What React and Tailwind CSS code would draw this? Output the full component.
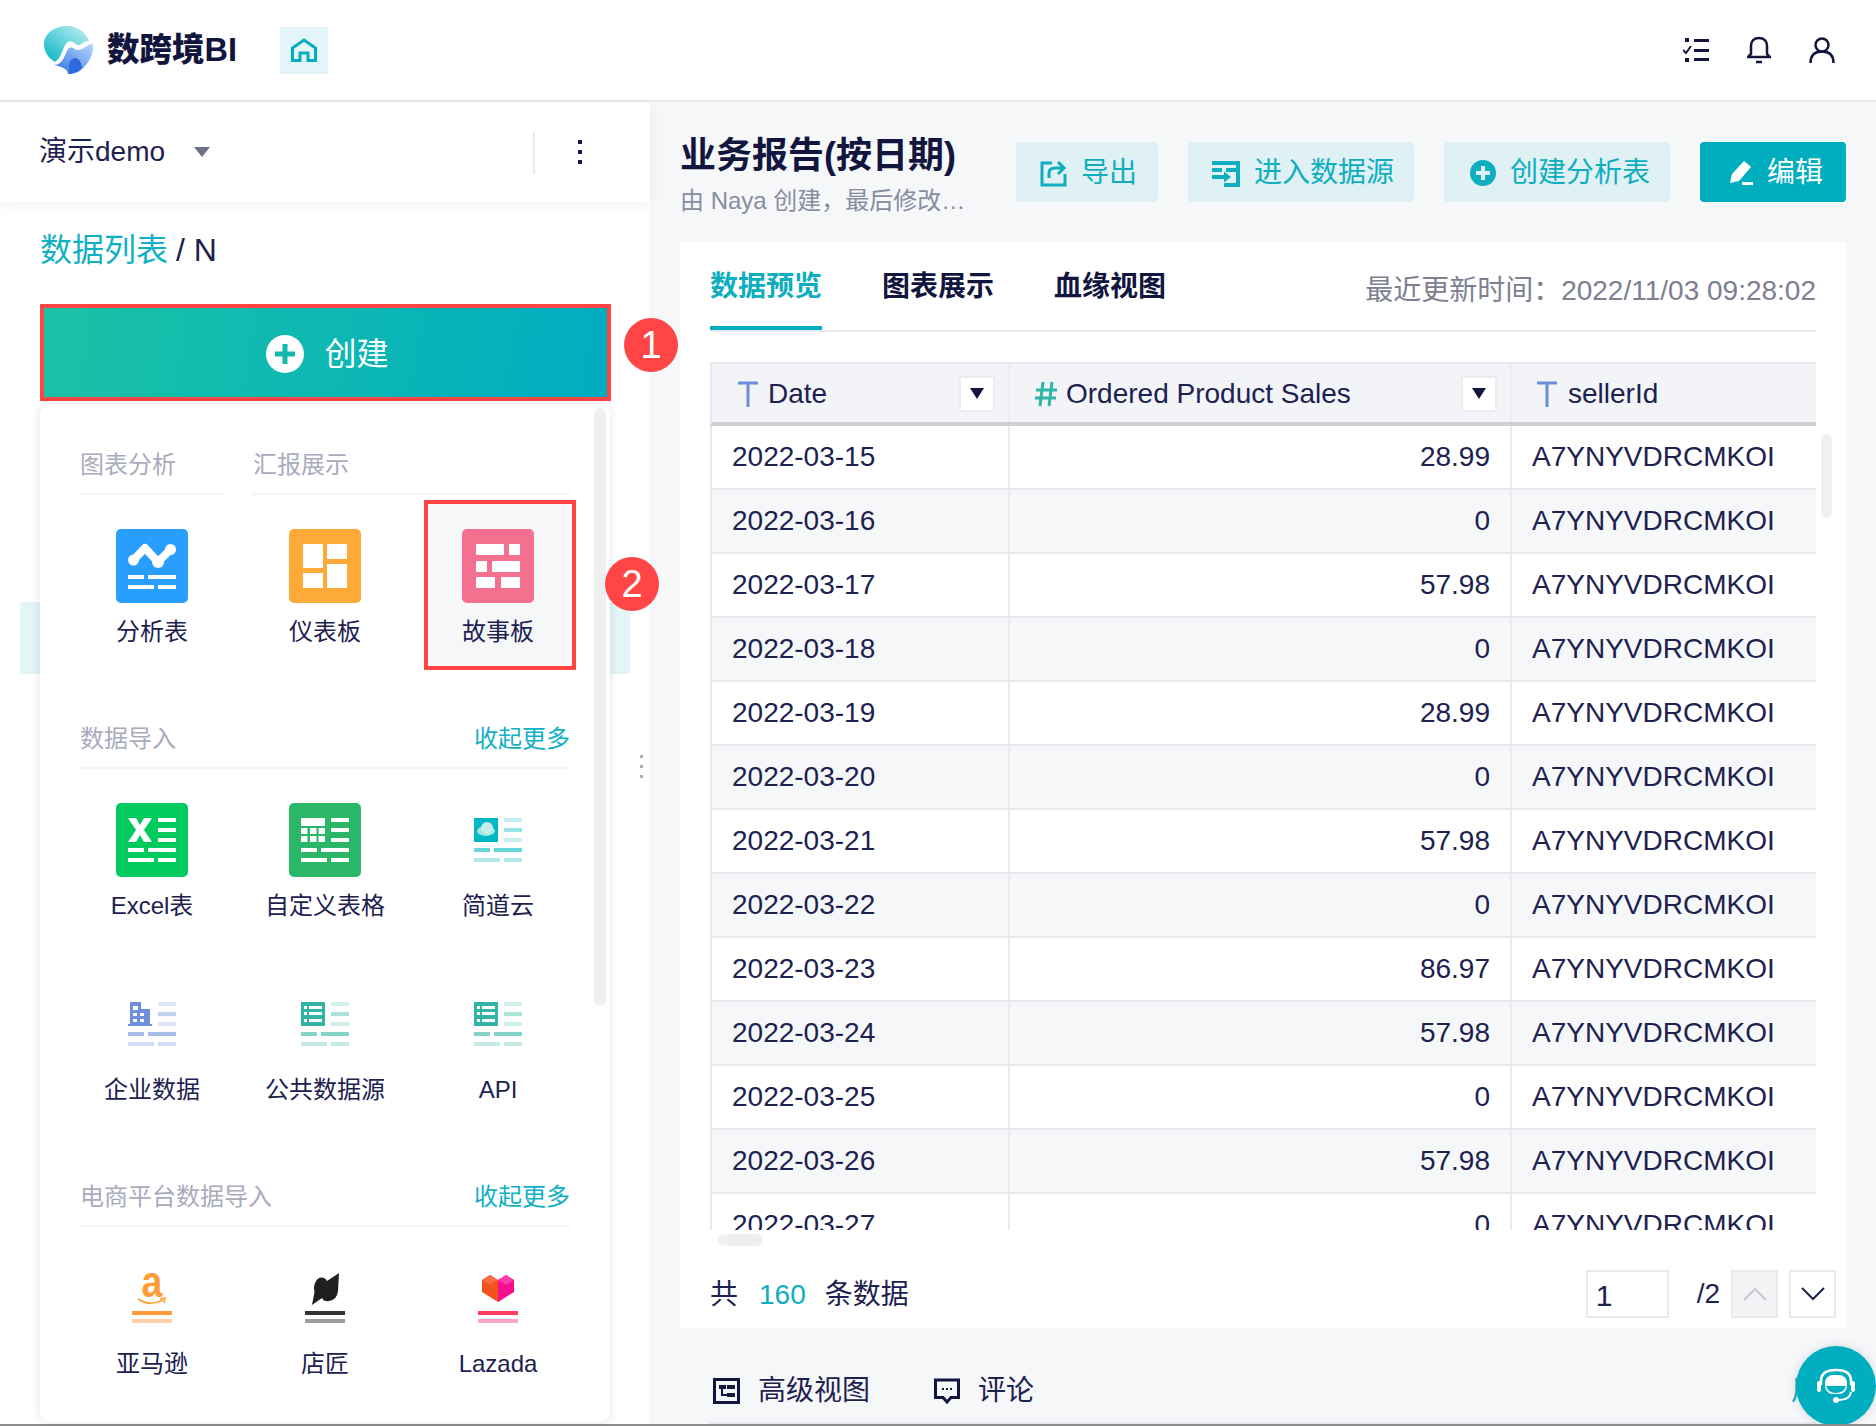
import React from "react";

const ROWS = [
  ["2022-03-15", "28.99"],
  ["2022-03-16", "0"],
  ["2022-03-17", "57.98"],
  ["2022-03-18", "0"],
  ["2022-03-19", "28.99"],
  ["2022-03-20", "0"],
  ["2022-03-21", "57.98"],
  ["2022-03-22", "0"],
  ["2022-03-23", "86.97"],
  ["2022-03-24", "57.98"],
  ["2022-03-25", "0"],
  ["2022-03-26", "57.98"],
  ["2022-03-27", "0"],
];

function TileSvg({ children, bg }) {
  return (
    <svg width="72" height="74" viewBox="0 0 72 74">
      {bg && <rect width="72" height="74" rx="5" fill={bg} />}
      {children}
    </svg>
  );
}

// the four dashes every data tile has along the bottom
function BottomBars({ a = "#fff", b = "#fff", y = 45 }) {
  return (
    <>
      <rect x="12" y={y} width="16" height="4" fill={a} />
      <rect x="32" y={y} width="28" height="4" fill={a} />
      <rect x="12" y={y + 10} width="26" height="4" fill={b} />
      <rect x="42" y={y + 10} width="18" height="4" fill={b} />
    </>
  );
}

function SideBars({ a = "#fff", b = "#fff" }) {
  return (
    <>
      <rect x="42" y="15" width="18" height="4" fill={a} />
      <rect x="42" y="25" width="18" height="4" fill={b} />
      <rect x="42" y="35" width="18" height="4" fill={a} />
    </>
  );
}

const AnalysisIcon = () => (
  <TileSvg bg="#289eff">
    <path d="M17.5 31 L29 19 L42 33 L54.5 20.5" fill="none" stroke="#fff" strokeWidth="8" strokeLinecap="round" strokeLinejoin="round" />
    <circle cx="17.5" cy="31" r="5.5" fill="#fff" />
    <circle cx="42" cy="33" r="6" fill="#fff" />
    <circle cx="54.5" cy="20.5" r="5.5" fill="#fff" />
    <BottomBars y={46} />
  </TileSvg>
);

const DashboardIcon = () => (
  <TileSvg bg="#fdaa39">
    <rect x="14" y="15" width="20" height="24" fill="#fff" />
    <rect x="38" y="15" width="20" height="15" fill="#fff" />
    <rect x="14" y="44" width="20" height="15" fill="#fff" />
    <rect x="38" y="35" width="20" height="24" fill="#fff" />
  </TileSvg>
);

const StoryIcon = () => (
  <TileSvg bg="#f4708f">
    <rect x="14" y="15" width="28" height="11" fill="#fff" />
    <rect x="47" y="15" width="11" height="11" fill="#fff" />
    <rect x="14" y="32" width="11" height="11" fill="#fff" />
    <rect x="30" y="32" width="28" height="11" fill="#fff" />
    <rect x="14" y="48" width="19" height="11" fill="#fff" />
    <rect x="39" y="48" width="19" height="11" fill="#fff" />
  </TileSvg>
);

const ExcelIcon = () => (
  <TileSvg bg="#01cb5d">
    <path d="M12 15 H20 L24 22 L28 15 H36 L28 27 L36 39 H28 L24 32 L20 39 H12 L20 27 Z" fill="#fff" />
    <SideBars />
    <BottomBars />
  </TileSvg>
);

const CustomTableIcon = () => (
  <TileSvg bg="#2ab768">
    <rect x="12" y="15" width="24" height="8" fill="#fff" />
    {[25, 33].map((y) =>
      [12, 21, 29.5].map((x) => <rect key={`${x}-${y}`} x={x} y={y} width="6.5" height="6" fill="#fff" />)
    )}
    <SideBars />
    <BottomBars />
  </TileSvg>
);

const JiandaoIcon = () => (
  <TileSvg>
    <rect x="12" y="15" width="24" height="24" fill="#00b8c4" />
    <ellipse cx="24" cy="28" rx="9" ry="5" fill="#a5e4e4" />
    <circle cx="25" cy="25" r="6" fill="#c4eeee" />
    <SideBars a="#c6f0f2" b="#97e3e6" />
    <BottomBars a="#66d6da" b="#b2eaec" />
  </TileSvg>
);

const EnterpriseIcon = () => (
  <TileSvg>
    <path fillRule="evenodd" fill="#6c90dc" d="M14 15 H25 V22 H34 V37 H36 V39 H12 V37 H14 Z M17 19 V23 H22 V19 Z M17 26 V29 H21 V26 Z M24 26 V29 H28 V26 Z M17 32 V35 H21 V32 Z M24 32 V35 H28 V32 Z" />
    <SideBars a="#dfe6f8" b="#c3d1f1" />
    <BottomBars a="#a6bce9" b="#d2dcf5" />
  </TileSvg>
);

const ListIcon = () => (
  <TileSvg>
    <rect x="12" y="15" width="24" height="24" fill="#32b4a4" />
    {[19, 25, 32].map((y) => (
      <g key={y} fill="#fff">
        <rect x="15" y={y} width="3" height="3" />
        <rect x="20" y={y} width="13" height="3" />
      </g>
    ))}
    <SideBars a="#d2f0ea" b="#ade2d8" />
    <BottomBars a="#85d3c8" b="#c6ebe5" />
  </TileSvg>
);

const LogoBars = ({ a, b }) => (
  <>
    <rect x="16" y="50" width="40" height="4" fill={a} />
    <rect x="16" y="58" width="40" height="4" fill={b} />
  </>
);

const AmazonIcon = () => (
  <TileSvg>
    <text transform="translate(36 36) scale(0.85 1)" textAnchor="middle" fontFamily="Liberation Sans" fontWeight="700" fontSize="44" fill="#ff9c35">a</text>
    <path d="M22 38 Q34 46 47 39 M44 38 L49 37 L48 42" fill="none" stroke="#ff9c35" strokeWidth="1.6" />
    <LogoBars a="#ff9c35" b="#ffd3a5" />
  </TileSvg>
);

const DianjiangIcon = () => (
  <TileSvg>
    <path fill="#1f1f1f" d="M50 12 L49 30 Q48 39 40 40 Q35 41 33 37 L23 44 L25.5 31 Q24 25 27 20 Q30 15 35 17 Q37 18 38 20 Z" />
    <LogoBars a="#333333" b="#9d9d9d" />
  </TileSvg>
);

const LazadaIcon = () => (
  <TileSvg>
    <path fill="#f4511e" d="M36 41 L20 31 V19 L28 14 L36 19 Z" />
    <path fill="#f50f8f" d="M36 41 L52 31 V19 L44 14 L36 19 Z" />
    <path fill="#fa6a45" d="M20 19 L28 14 L36 19 L28 24 Z" />
    <path fill="#fb3ca8" d="M36 19 L44 14 L52 19 L44 24 Z" />
    <LogoBars a="#ff3d64" b="#ffa6bf" />
  </TileSvg>
);

function Tool({ icon, label, boxed }) {
  return (
    <div className="relative flex h-[180px] flex-col items-center">
      {boxed && (
        <div className="absolute left-[2px] top-[-29px] h-[170px] w-[152px] border-4 border-[#ff4444] bg-[#f6f7f9]" />
      )}
      <div className="relative h-[74px] w-[72px]">{icon}</div>
      <div className="relative mt-[12px] whitespace-nowrap text-[24px] leading-[34px] text-[#1d2150]">{label}</div>
    </div>
  );
}

function SectionHead({ title }) {
  return (
    <div className="flex h-[60px] items-center justify-between border-b-2 border-[#f3f4f8] pt-[2px] text-[24px]">
      <span className="text-[#a9abbd]">{title}</span>
      <span className="text-[#0eb0c4]">收起更多</span>
    </div>
  );
}

function ToolGrid({ children }) {
  return <div className="-mx-1 mt-[34px] grid grid-cols-[152px_152px_152px] gap-x-[21px] gap-y-1">{children}</div>;
}

function Sidebar() {
  return (
    <aside className="relative w-[650px] shrink-0 bg-white">
      <div className="relative z-10 flex h-[100px] items-center pl-[39px] pr-[68px] shadow-[0_4px_12px_rgba(30,35,80,0.05)]">
        <span className="text-[28px] text-[#1d2150]">演示demo</span>
        <svg className="ml-[29px]" width="16" height="10" viewBox="0 0 16 10">
          <path d="M0 0 H16 L8 10 Z" fill="#6e7187" />
        </svg>
        <div className="ml-auto h-[43px] w-[2px] bg-[#e9eaee]" />
        <div className="ml-[43px] flex flex-col gap-[6px]">
          <span className="h-1 w-1 bg-[#12165a]" />
          <span className="h-1 w-1 bg-[#12165a]" />
          <span className="h-1 w-1 bg-[#12165a]" />
        </div>
      </div>

      <div className="flex h-[96px] items-center px-10 text-[32px]">
        <span className="text-[#0eb0c4]">数据列表</span>
        <span className="ml-[8px] text-[#1d2150]">/ N</span>
      </div>

      <div className="mx-10 mt-[6px] flex h-[97px] w-[571px] items-center justify-center gap-[20px] border-4 border-[#ff4444] bg-[linear-gradient(100deg,#1bc2a6,#00adc0)] pl-[4px] pt-[2px]">
        <svg width="38" height="38" viewBox="0 0 38 38">
          <circle cx="19" cy="19" r="19" fill="#fff" />
          <path d="M19 9 V29 M9 19 H29" stroke="#13b8b0" strokeWidth="5" />
        </svg>
        <span className="text-[32px] text-white">创建</span>
      </div>

      {/* selected list row, mostly hidden by the menu */}
      <div className="absolute left-[20px] top-[500px] h-[72px] w-[610px] rounded-[4px] bg-[#e3f5f7]" />

      <div className="relative z-10 mx-10 mt-[3px] h-[1018px] w-[570px] overflow-hidden rounded-[10px] bg-white px-10 pt-[31px] shadow-[0_0_10px_rgba(30,35,80,0.12)]">
        <div className="absolute right-[4px] top-[4px] h-[598px] w-[12px] rounded-full bg-[#eff0f2]" />
        <div className="flex gap-[29px] text-[24px] text-[#a9abbd]">
          <div className="flex h-[60px] w-[144px] items-center border-b-2 border-[#f3f4f8] pt-[2px]">图表分析</div>
          <div className="flex h-[60px] w-[317px] items-center border-b-2 border-[#f3f4f8] pt-[2px]">汇报展示</div>
        </div>
        <ToolGrid>
          <Tool icon={<AnalysisIcon />} label="分析表" />
          <Tool icon={<DashboardIcon />} label="仪表板" />
          <Tool icon={<StoryIcon />} label="故事板" boxed />
        </ToolGrid>

        <SectionHead title="数据导入" />
        <ToolGrid>
          <Tool icon={<ExcelIcon />} label="Excel表" />
          <Tool icon={<CustomTableIcon />} label="自定义表格" />
          <Tool icon={<JiandaoIcon />} label="简道云" />
          <Tool icon={<EnterpriseIcon />} label="企业数据" />
          <Tool icon={<ListIcon />} label="公共数据源" />
          <Tool icon={<ListIcon />} label="API" />
        </ToolGrid>

        <SectionHead title="电商平台数据导入" />
        <ToolGrid>
          <Tool icon={<AmazonIcon />} label="亚马逊" />
          <Tool icon={<DianjiangIcon />} label="店匠" />
          <Tool icon={<LazadaIcon />} label="Lazada" />
        </ToolGrid>
      </div>

      {/* resize handle */}
      <div className="absolute left-[640px] top-[653px] flex flex-col gap-[7px]">
        <span className="h-[3px] w-[3px] bg-[#a9abb5]" />
        <span className="h-[3px] w-[3px] bg-[#a9abb5]" />
        <span className="h-[3px] w-[3px] bg-[#a9abb5]" />
      </div>

      <div className="absolute left-[624px] top-[216px] z-20 flex h-[54px] w-[54px] items-center justify-center rounded-full bg-[#ff4545] text-[38px] text-white">1</div>
      <div className="absolute left-[605px] top-[455px] z-20 flex h-[54px] w-[54px] items-center justify-center rounded-full bg-[#ff4545] text-[38px] text-white">2</div>
    </aside>
  );
}

function ActionButton({ icon, label, width, inset, solid }) {
  return (
    <button
      className={`flex h-[60px] items-center gap-[14px] rounded-[4px] pt-[2px] text-[28px] ${width} ${inset} ${
        solid ? "bg-[#00aebf] text-white" : "bg-[#dff1f4] text-[#0eaebf]"
      }`}
    >
      {icon}
      {label}
    </button>
  );
}

const TextType = () => (
  <svg width="22" height="26" viewBox="0 0 22 26">
    <path d="M1 2 H21 M11 2 V26" fill="none" stroke="#6a8fd8" strokeWidth="3" />
  </svg>
);

const NumberType = () => (
  <svg width="24" height="26" viewBox="0 0 24 26">
    <path d="M9 1 L6 25 M18 1 L15 25 M2 9 H23 M1 17 H22" fill="none" stroke="#2fb5a5" strokeWidth="3" />
  </svg>
);

const SortButton = () => (
  <div className="flex h-[36px] w-[36px] items-center justify-center border-2 border-[#ecedf1] bg-white">
    <svg width="14" height="11" viewBox="0 0 14 11">
      <path d="M0 0 H14 L7 11 Z" fill="#12163f" />
    </svg>
  </div>
);

function DataTable() {
  return (
    <div className="mt-[30px] h-[868px] w-[1106px] overflow-hidden text-[28px] text-[#1d2150]">
      <div className="grid h-[64px] w-[1106px] grid-cols-[296px_502px_306px] border-l-2 border-t-2 border-b-4 border-l-[#e8e9ee] border-t-[#e8e9ee] border-b-[#ced0d8] bg-[#f3f4f8] pt-[1px]">
        <div className="flex items-center gap-[9px] pl-[25px] pr-[13px]">
          <TextType />
          <span>Date</span>
          <span className="ml-auto"><SortButton /></span>
        </div>
        <div className="flex items-center gap-[8px] border-l-2 border-[#ebecf0] pl-[24px] pr-[13px]">
          <NumberType />
          <span>Ordered Product Sales</span>
          <span className="ml-auto"><SortButton /></span>
        </div>
        <div className="flex items-center gap-[10px] border-l-2 border-[#ebecf0] pl-[24px]">
          <TextType />
          <span>sellerId</span>
        </div>
      </div>
      {ROWS.map(([date, sales], i) => (
        <div
          key={date}
          className={`grid h-[64px] w-[1106px] grid-cols-[296px_502px_306px] border-b-2 border-l-2 border-[#e8e9ee] ${
            i % 2 ? "bg-[#f6f7f9]" : "bg-white"
          }`}
        >
          <div className="flex items-center pl-[20px]">{date}</div>
          <div className="flex items-center justify-end border-l-2 border-[#ebecf0] pr-[20px]">{sales}</div>
          <div className="flex items-center border-l-2 border-[#ebecf0] pl-[20px]">A7YNYVDRCMKOI</div>
        </div>
      ))}
    </div>
  );
}

function Main() {
  return (
    <main className="relative flex-1 bg-[#f6f7f9] px-[30px] pt-[40px]">
      <div className="flex h-[60px]">
        <div className="w-[336px] shrink-0">
          <div className="mt-[-8px] whitespace-nowrap text-[36px] font-bold leading-[44px] text-[#12163f]">业务报告(按日期)</div>
          <div className="mt-[7px] whitespace-nowrap text-[24px] leading-[32px] text-[#888ca0]">由 Naya 创建，最后修改…</div>
        </div>
        <div className="flex gap-[30px]">
          <ActionButton
            width="w-[142px]"
            inset="pl-[24px]"
            label="导出"
            icon={
              <svg width="27" height="28" viewBox="0 0 27 28" fill="none" stroke="#0eaebf" strokeWidth="3">
                <path d="M12 4 H2 V26 H25 V15" />
                <path d="M9 19 V14 Q9 9 15 9 H24 M18 3 L24 9 L18 15" />
              </svg>
            }
          />
          <ActionButton
            width="w-[226px]"
            inset="pl-[24px]"
            label="进入数据源"
            icon={
              <svg width="28" height="28" viewBox="0 0 28 28" fill="#0eaebf">
                <rect x="0" y="2" width="28" height="4" />
                <rect x="0" y="9" width="10" height="4" />
                <path d="M24 6 H28 V28 H12 V24 H24 Z" />
                <rect x="14" y="9" width="10" height="4" />
                <path d="M0 16 H12 V12.5 L19 18 L12 23.5 V20 H0 Z" />
              </svg>
            }
          />
          <ActionButton
            width="w-[226px]"
            inset="pl-[26px]"
            label="创建分析表"
            icon={
              <svg width="26" height="26" viewBox="0 0 26 26">
                <circle cx="13" cy="13" r="13" fill="#0eaebf" />
                <path d="M13 6 V20 M6 13 H20" stroke="#dff1f4" strokeWidth="4" />
              </svg>
            }
          />
          <ActionButton
            solid
            width="w-[146px]"
            inset="pl-[29px]"
            label="编辑"
            icon={
              <svg width="24" height="26" viewBox="0 0 24 26" fill="#fff">
                <path d="M15 1 L22 7 L10 21 L1 23 L3 14 Z" />
                <rect x="13" y="22" width="11" height="3" />
              </svg>
            }
          />
        </div>
      </div>

      <section className="relative mt-[40px] flex h-[1086px] flex-col bg-white px-[30px]">
        <div className="flex h-[90px] shrink-0 border-b-2 border-[#e8e9ee]">
          <div className="flex h-[88px] items-center border-b-4 border-[#00aebf] pt-[5px] text-[28px] font-bold text-[#0eaebf]">数据预览</div>
          <div className="ml-[60px] flex h-[88px] items-center pt-[2px] text-[28px] font-bold text-[#12163f]">图表展示</div>
          <div className="ml-[60px] flex h-[88px] items-center pt-[2px] text-[28px] font-bold text-[#12163f]">血缘视图</div>
          <div className="ml-auto flex h-[88px] items-center pt-[9px] text-[28px] text-[#7c8091]">最近更新时间：2022/11/03 09:28:02</div>
        </div>

        <DataTable />

        <div className="absolute left-[1141px] top-[192px] h-[84px] w-[11px] rounded-full bg-[#eef0f2]" />
        <div className="absolute left-[38px] top-[992px] h-[12px] w-[45px] rounded-full bg-[#eef0f2]" />

        <div className="mt-[40px] flex h-[48px] items-center text-[28px] text-[#1d2150]">
          <span className="pt-[2px]">共</span>
          <span className="ml-[21px] pt-[2px] text-[#0eaebf]">160</span>
          <span className="ml-[19px] pt-[2px]">条数据</span>
          <div className="ml-auto flex h-[48px] w-[83px] items-center border-2 border-[#e8e9ee] pl-[8px] pt-[3px] text-[30px]">1</div>
          <span className="ml-[28px]">/2</span>
          <div className="ml-[11px] flex h-[48px] w-[47px] items-center justify-center border-2 border-[#e8e9ee] bg-[#f3f4f6]">
            <svg width="24" height="14" viewBox="0 0 24 14" fill="none" stroke="#c6c8d2" strokeWidth="2"><path d="M1 13 L12 2 L23 13" /></svg>
          </div>
          <div className="ml-[11px] mr-[-20px] flex h-[48px] w-[47px] items-center justify-center border-2 border-[#e8e9ee] bg-white">
            <svg width="24" height="14" viewBox="0 0 24 14" fill="none" stroke="#1d2150" strokeWidth="2"><path d="M1 1 L12 12 L23 1" /></svg>
          </div>
        </div>
      </section>

      <div className="flex h-[94px] items-center pl-[33px] pt-[32px] text-[28px] text-[#1d2150]">
        <svg width="27" height="26" viewBox="0 0 27 26">
          <rect x="1.5" y="1.5" width="24" height="23" fill="none" stroke="#12163f" strokeWidth="3" />
          <path d="M9 9 V17 H14" fill="none" stroke="#12163f" strokeWidth="2" />
          <rect x="6" y="7" width="7" height="4" fill="#12163f" />
          <rect x="14" y="7" width="8" height="4" fill="#12163f" />
          <rect x="14" y="15" width="8" height="4" fill="#12163f" />
        </svg>
        <span className="ml-[18px]">高级视图</span>
        <svg className="ml-[64px]" width="26" height="26" viewBox="0 0 26 26">
          <path d="M1.5 2 H24.5 V19.5 H17 L13 24 L9 19.5 H1.5 Z" fill="none" stroke="#12163f" strokeWidth="3" />
          <rect x="8" y="10" width="2" height="2" fill="#12163f" />
          <rect x="12" y="10" width="2" height="2" fill="#12163f" />
          <rect x="16" y="10" width="2" height="2" fill="#12163f" />
        </svg>
        <span className="ml-[18px]">评论</span>
        <span className="ml-auto w-[55px] shrink-0 whitespace-nowrap text-[#0eaebf]">用户</span>
      </div>
      <div className="mx-[30px] h-1 bg-[#e8e9ee]" />

      <div className="absolute bottom-0 right-0 flex h-[80px] w-[80px] items-center justify-center rounded-full bg-[#00aebf] shadow-[0_0_10px_rgba(30,35,80,0.15)]">
        <svg width="40" height="36" viewBox="0 0 40 36" fill="none">
          <path d="M5 17 V13 Q5 2 20 2 Q35 2 35 13 V17" stroke="#fff" strokeWidth="2.5" />
          <rect x="9" y="7" width="22" height="19" rx="8" fill="#fff" />
          <path d="M10 18 H30 Q28 25 20 25 Q12 25 10 18 Z" fill="#00aebf" />
          <rect x="1" y="13" width="4" height="11" rx="2" fill="#fff" />
          <rect x="35" y="13" width="4" height="11" rx="2" fill="#fff" />
          <path d="M35 24 Q34 32 22 32" stroke="#fff" strokeWidth="2" />
          <circle cx="20" cy="32" r="3" fill="#fff" />
        </svg>
      </div>
    </main>
  );
}

export default function App() {
  return (
    <div className="relative flex h-[1426px] w-[1876px] flex-col overflow-hidden bg-white [font-family:'Liberation_Sans','Noto_Sans_CJK_SC',sans-serif]">
      <header className="flex h-[102px] shrink-0 items-center border-b-2 border-[#e7e8ec] bg-white pl-[44px] pr-[41px]">
        <svg width="50" height="48" viewBox="0 0 50 48">
          <defs>
            <linearGradient id="logoA" x1="0" y1="1" x2="1" y2="0">
              <stop offset="0" stopColor="#06b2c4" />
              <stop offset="1" stopColor="#c5f3f3" />
            </linearGradient>
            <linearGradient id="logoB" x1="0" y1="1" x2="1" y2="0">
              <stop offset="0" stopColor="#2d6fe0" />
              <stop offset="1" stopColor="#b7d9ff" />
            </linearGradient>
          </defs>
          <path d="M23 0 C35 0 42 7 45 15 C40 14 36 21 33 19 C28 15 25 13 21 19 C18 25 17 32 11 36 C4 32 0 25 0 18 C0 8 10 0 23 0 Z" fill="url(#logoA)" />
          <path d="M10 39 C20 39 21 26 25 22 C28 19 31 25 35 24 C40 23 44 17 49 18 C50 28 45 36 40 41 C36 46 30 48 24 48 C24 44 20 41 10 39 Z" fill="url(#logoB)" />
          <path d="M24 48 C27 42 22 38 28 33 C33 30 37 34 38 42 C34 46 29 48 24 48 Z" fill="#2f6bdc" />
        </svg>
        <span className="ml-[13px] w-[130px] whitespace-nowrap text-[32.5px] font-black leading-none text-[#12163f]">数跨境BI</span>
        <div className="ml-[43px] flex h-[47px] w-[48px] items-center justify-center bg-[#e3f5f9]">
          <svg width="26" height="24" viewBox="0 0 26 24" fill="none" stroke="#06adc0" strokeWidth="3">
            <path d="M1.5 10 L13 2 L24.5 10 V22.5 H17 V15 H9 V22.5 H1.5 Z" />
          </svg>
        </div>
        <div className="ml-auto flex items-center gap-[38px]">
          <svg width="26" height="24" viewBox="0 0 26 24" fill="#12163f">
            <rect x="2" y="0" width="4" height="4" />
            <rect x="2" y="20" width="4" height="4" />
            <rect x="11" y="1" width="15" height="3" />
            <rect x="11" y="11" width="15" height="3" />
            <rect x="11" y="20" width="15" height="3" />
            <path d="M0 12 L3 15 L8 8" fill="none" stroke="#12163f" strokeWidth="2" />
          </svg>
          <svg width="24" height="28" viewBox="0 0 24 28" fill="none" stroke="#12163f" strokeWidth="2.5">
            <path d="M1 21 H23 L20 18 V10 C20 5 17 2 12 2 C7 2 4 5 4 10 V18 Z" />
            <path d="M9 26 H15" />
          </svg>
          <svg width="26" height="26" viewBox="0 0 26 26" fill="none" stroke="#12163f" strokeWidth="2.5">
            <circle cx="13" cy="8" r="6.5" />
            <path d="M1.5 26 C1.5 18 6 14.5 13 14.5 C20 14.5 24.5 18 24.5 26" />
          </svg>
        </div>
      </header>
      <div className="flex flex-1">
        <Sidebar />
        <Main />
      </div>
      <div className="absolute inset-x-0 bottom-0 h-[2px] bg-[#8c8c8c]" />
    </div>
  );
}
